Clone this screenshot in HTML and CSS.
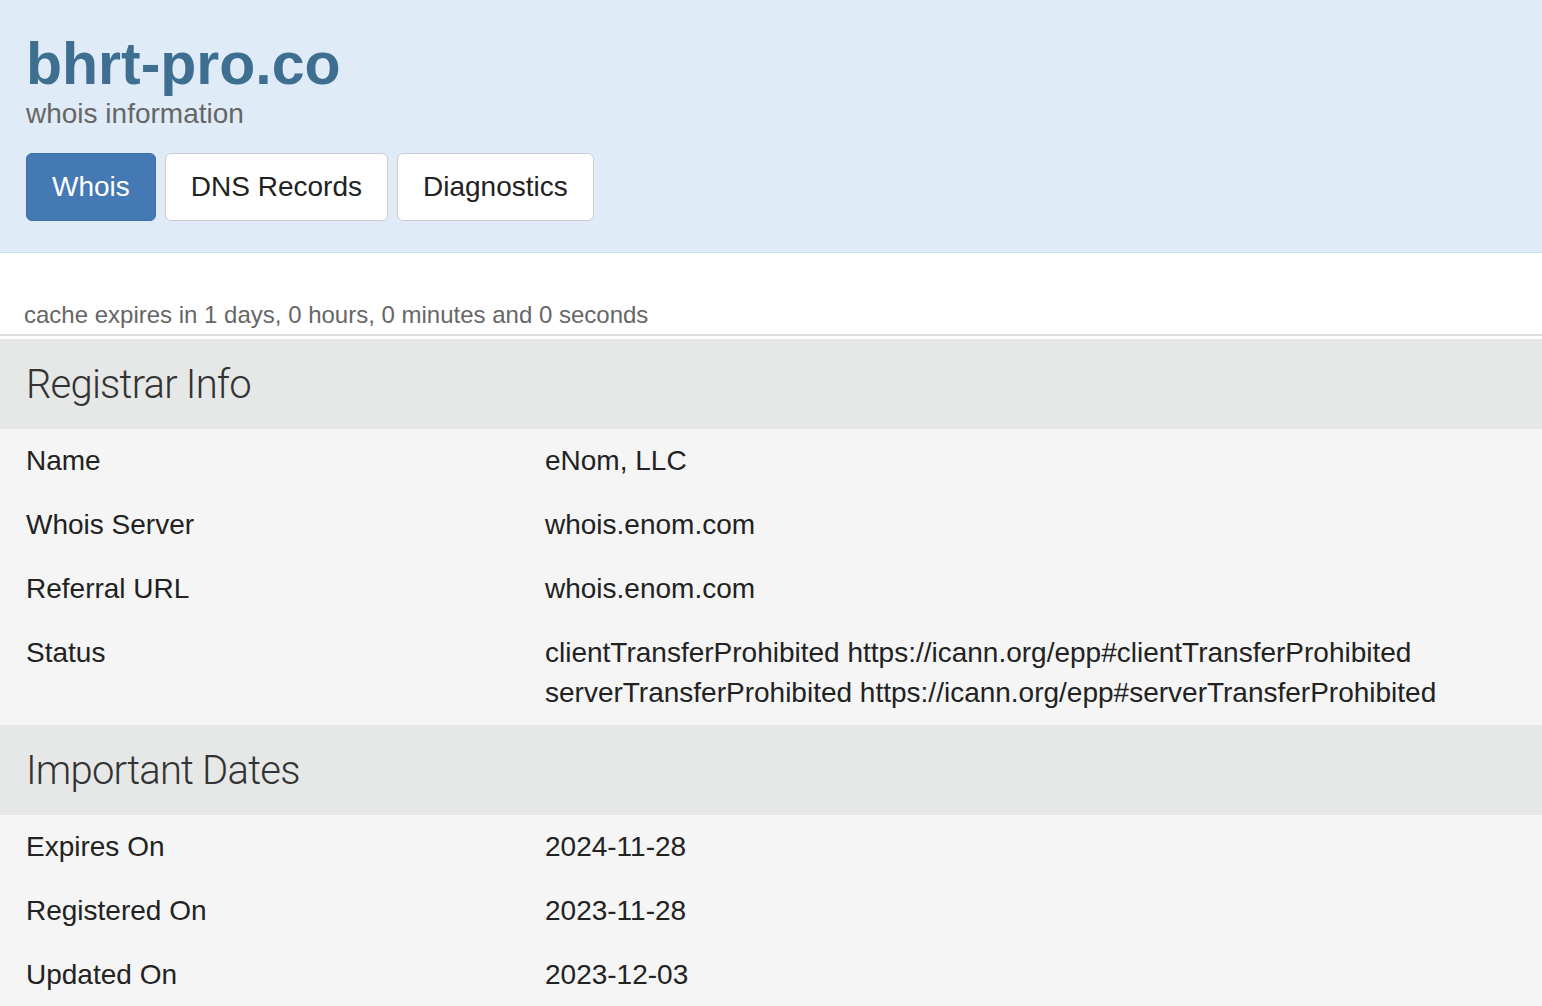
FILE: index.html
```html
<!DOCTYPE html>
<html lang="en">
<head>
    <meta charset="UTF-8">
    <title>bhrt-pro.co whois information</title>
    <link rel="stylesheet" href="styles.css">
</head>
<body>

<div class="jumbo">
    <h1>bhrt-pro.co</h1>
    <div class="subtitle">whois information</div>
    <div class="tabs">
        <a class="tab active" href="#">Whois</a>
        <a class="tab" href="#">DNS Records</a>
        <a class="tab" href="#">Diagnostics</a>
    </div>
</div>

<div class="cache">cache expires in 1 days, 0 hours, 0 minutes and 0 seconds</div>

<div class="section">
    <h2>Registrar Info</h2>
    <div class="rows">
        <div class="row"><div class="key">Name</div><div class="val">eNom, LLC</div></div>
        <div class="row"><div class="key">Whois Server</div><div class="val">whois.enom.com</div></div>
        <div class="row"><div class="key">Referral URL</div><div class="val">whois.enom.com</div></div>
        <div class="row">
            <div class="key">Status</div>
            <div class="val">clientTransferProhibited https://icann.org/epp#clientTransferProhibited<br>serverTransferProhibited https://icann.org/epp#serverTransferProhibited</div>
        </div>
    </div>
</div>

<div class="section">
    <h2>Important Dates</h2>
    <div class="rows">
        <div class="row"><div class="key">Expires On</div><div class="val">2024-11-28</div></div>
        <div class="row"><div class="key">Registered On</div><div class="val">2023-11-28</div></div>
        <div class="row"><div class="key">Updated On</div><div class="val">2023-12-03</div></div>
    </div>
</div>

</body>
</html>
```

FILE: styles.css
```css
body {
    margin: 0;
    font-family: 'Liberation Sans', Arial, sans-serif;
    color: #222;
    background: #ffffff;
}

.jumbo {
    background: #dfecf7;
    border-bottom: 1px solid #c9e1f1;
    padding: 31px 26px 31px;
}

h1 {
    margin: 0;
    font-size: 59px;
    line-height: 66px;
    font-weight: bold;
    color: #3e6f91;
}

.subtitle {
    font-size: 28px;
    line-height: 34px;
    color: #666;
}

.tabs {
    display: flex;
    gap: 9px;
    margin-top: 22px;
}

.tab {
    display: block;
    padding: 12px 25px;
    font-size: 28px;
    line-height: 42px;
    color: #222;
    text-decoration: none;
    background: #ffffff;
    border: 1px solid #cccccc;
    border-radius: 6px;
}

.tab.active {
    background: #4479b3;
    border-color: #3d6fa6;
    color: #ffffff;
}

.cache {
    padding: 47px 24px 4px;
    font-size: 24px;
    line-height: 30px;
    color: #666;
    border-bottom: 2px solid #dddddd;
    margin-bottom: 3px;
}

h2 {
    margin: 0;
    height: 90px;
    display: flex;
    align-items: center;
    padding: 0 26px;
    background: #e6e8e7;
    font-family: Roboto, sans-serif;
    font-weight: 300;
    font-size: 40px;
    letter-spacing: -0.8px;
    color: #333;
}

.rows {
    background: #f5f5f5;
}

.row {
    display: grid;
    grid-template-columns: 519px 1fr;
    padding: 12px 26px;
    font-size: 28px;
    line-height: 40px;
}
```
